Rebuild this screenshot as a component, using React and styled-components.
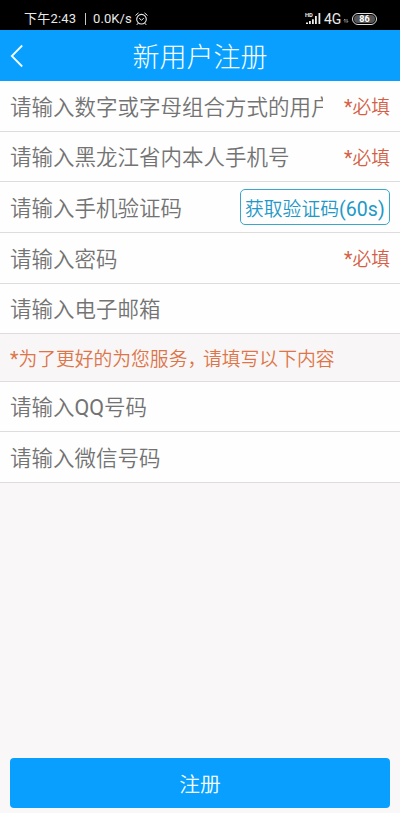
import React from "react";
import styled, { createGlobalStyle } from "styled-components";

const fontStack = `Roboto, "Noto Sans CJK SC", sans-serif`;
const cjkStack = `"Noto Sans CJK SC", sans-serif`;

const GlobalStyle = createGlobalStyle`
  * { box-sizing: border-box; }
  body {
    margin: 0;
    background: #faf7f8;
    font-family: ${fontStack};
  }
`;

const Screen = styled.div`
  width: 400px;
  height: 813px;
  display: flex;
  flex-direction: column;
  overflow: hidden;
  background: #faf7f8;
`;

const StatusBar = styled.div`
  height: 30px;
  flex: none;
  display: flex;
  align-items: center;
  justify-content: space-between;
  padding: 7px 23px 0 24px;
  background: #000;
  color: #e9e9e9;
  font-size: 13px;
  line-height: 22px;
  white-space: nowrap;
`;

const StatusGroup = styled.div`
  display: flex;
  align-items: center;
`;

const StatusText = styled.span`
  width: ${(p) => p.$width}px;
  font-size: ${(p) => p.$size || 13}px;
  letter-spacing: ${(p) => p.$spacing || 0}px;
`;

const NetworkText = styled(StatusText)`
  margin-left: 2px;
`;

const Divider = styled.span`
  width: 1px;
  height: 12px;
  margin: 0 7px 0 7px;
  background: #c8c8c8;
`;

const Battery = styled.div`
  width: 25px;
  height: 12px;
  margin-left: 3px;
  padding: 1px;
  border: 1px solid #ddd;
  border-radius: 6px;
`;

const BatteryFill = styled.div`
  height: 8px;
  border-radius: 4px;
  background: #555;
  color: #fff;
  font-size: 9px;
  font-weight: 700;
  line-height: 9px;
  text-align: center;
`;

const Header = styled.header`
  height: 51px;
  flex: none;
  display: grid;
  grid-template-columns: 40px 1fr 40px;
  align-items: center;
  background: #089fff;
`;

const BackButton = styled.button`
  display: flex;
  padding: 0 0 0 10px;
  border: 0;
  background: none;
`;

const Title = styled.h1`
  margin: 0;
  padding-top: 4px;
  color: #f8ffff;
  font-size: 27px;
  font-weight: 300;
  line-height: 40px;
  text-align: center;
`;

const Row = styled.div`
  height: ${(p) => p.$height}px;
  flex: none;
  display: flex;
  align-items: center;
  justify-content: space-between;
  padding: 0 10px;
  border-bottom: 1px solid #dedcdd;
  background: #fefefe;
`;

const Placeholder = styled.span`
  width: ${(p) => (p.$clip ? "313px" : "auto")};
  padding-bottom: 1px;
  overflow: hidden;
  color: #737373;
  font-family: ${cjkStack};
  font-size: 21.5px;
  font-weight: 350;
  line-height: 34px;
  white-space: nowrap;
`;

const Latin = styled.span`
  font-family: Roboto, sans-serif;
  font-size: ${(p) => p.$size || "inherit"};
  font-weight: 400;
  line-height: 1;
  letter-spacing: ${(p) => p.$spacing || 0}px;
`;

const Asterisk = styled.span`
  font-family: Roboto, sans-serif;
  font-weight: 400;
  font-size: 19.5px;
  line-height: 1;
`;

const Required = styled.span`
  flex: none;
  color: #d55f45;
  font-family: ${cjkStack};
  font-size: 18.8px;
  font-weight: 350;
  line-height: 30px;
  white-space: nowrap;
`;

const CodeButton = styled.button`
  width: 150px;
  height: 36px;
  padding: 1px 0 0;
  border: 1px solid #3aa6cc;
  border-radius: 5px;
  background: #fefefe;
  color: #2398c6;
  font: 350 18.8px/32px ${cjkStack};
  white-space: nowrap;
`;

const Notice = styled.div`
  height: 48px;
  flex: none;
  padding: 0 10px;
  border-bottom: 1px solid #e3dcde;
  background: #f8f6f7;
  color: #dc7548;
  font-family: ${cjkStack};
  font-size: 18.8px;
  font-weight: 350;
  line-height: 48px;
  white-space: nowrap;
`;

const Comma = styled.span`
  letter-spacing: -3.2px;
`;

const SubmitButton = styled.button`
  height: 50px;
  flex: none;
  margin: auto 10px 5px;
  padding: 4px 0 0;
  border: 0;
  border-radius: 4px;
  background: #089fff;
  color: #f2feff;
  font: 350 20.8px/30px ${fontStack};
`;

const AlarmIcon = () => (
  <svg width="13" height="14" viewBox="0 0 13 14" fill="none" stroke="#e9e9e9" strokeLinecap="round">
    <circle cx="6.5" cy="7.2" r="4.8" strokeWidth="1.1" />
    <path d="M.8 3.2 3.2 1.1M9.8 1.1l2.4 2.1M4.5 6.5l2 1.7 2-1.7M3 11.4l-1 1.2M10 11.4l1 1.2" />
  </svg>
);

const SignalIcon = () => (
  <svg width="17" height="13" viewBox="0 0 17 13" fill="#eee">
    <path d="M1 10.5h2V12H1zM4 9h1.8v3H4zM7 7.2h1.8V12H7zM10 4h1.8v8H10zM13.5 1h1.8v11h-1.8z" />
    <text x="0" y="4.6" fontSize="5.8" fontWeight="700" fontFamily="Roboto">HD</text>
  </svg>
);

const DataIcon = () => (
  <svg width="6" height="10" viewBox="0 0 6 10" fill="none" stroke="#aaa" strokeWidth=".8">
    <path d="M2 8.5V5L.8 6.4M4 5v3.5l1.2-1.4" />
  </svg>
);

const BackIcon = () => (
  <svg width="14" height="24" viewBox="0 0 14 24" fill="none" stroke="#f4ffff" strokeWidth="1.8">
    <path d="M12.2 1.5 1.8 12l10.4 10.5" />
  </svg>
);

const accountFields = [
  { text: "请输入数字或字母组合方式的用户", required: true, height: 51 },
  { text: "请输入黑龙江省内本人手机号", required: true, height: 50 },
  { text: "请输入手机验证码", code: true, height: 51 },
  { text: "请输入密码", required: true, height: 51 },
  { text: "请输入电子邮箱", height: 50 },
];

const contactFields = [
  { text: <>请输入<Latin>QQ</Latin>号码</>, height: 50 },
  { text: "请输入微信号码", height: 51 },
];

const Field = ({ field }) => (
  <Row $height={field.height}>
    <Placeholder $clip={field.required}>{field.text}</Placeholder>
    {field.required && (
      <Required>
        <Asterisk>*</Asterisk>必填
      </Required>
    )}
    {field.code && (
      <CodeButton>
        获取验证码<Latin $size="19.5px" $spacing={0.1}>(60s)</Latin>
      </CodeButton>
    )}
  </Row>
);

export default function App() {
  return (
    <Screen>
      <GlobalStyle />
      <StatusBar>
        <StatusGroup>
          <StatusText $width={54} $spacing={0.2}>下午2:43</StatusText>
          <Divider />
          <StatusText $width={42} $spacing={0.1}>0.0K/s</StatusText>
          <AlarmIcon />
        </StatusGroup>
        <StatusGroup>
          <SignalIcon />
          <NetworkText $width={19} $size={14}>4G</NetworkText>
          <DataIcon />
          <Battery>
            <BatteryFill>86</BatteryFill>
          </Battery>
        </StatusGroup>
      </StatusBar>
      <Header>
        <BackButton aria-label="返回">
          <BackIcon />
        </BackButton>
        <Title>新用户注册</Title>
      </Header>
      {accountFields.map((field, i) => (
        <Field key={i} field={field} />
      ))}
      <Notice>
        <Asterisk>*</Asterisk>为了更好的为您服务<Comma>，</Comma>请填写以下内容
      </Notice>
      {contactFields.map((field, i) => (
        <Field key={i} field={field} />
      ))}
      <SubmitButton>注册</SubmitButton>
    </Screen>
  );
}
